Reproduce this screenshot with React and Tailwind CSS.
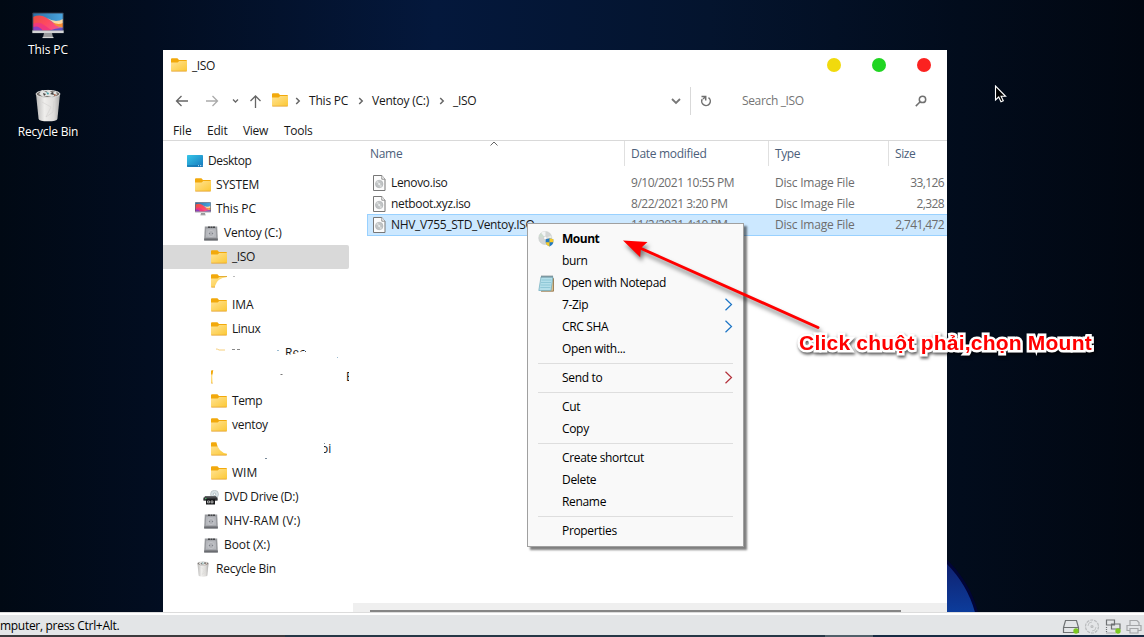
import React from 'react';

const TREE = [
  { label: 'Desktop', icon: 'desktop', pad: 'pl-[24px]', track: 'tracking-[-0.4px]' },
  { label: 'SYSTEM', icon: 'folder', pad: 'pl-[32px]', track: 'tracking-[-0.15px]' },
  { label: 'This PC', icon: 'pc', pad: 'pl-[32px]', track: 'tracking-[-0.1px]' },
  { label: 'Ventoy (C:)', icon: 'drive', pad: 'pl-[40px]', track: 'tracking-[-0.2px]' },
  { label: '_ISO', icon: 'folder', pad: 'pl-[48px]', track: 'tracking-[-0.4px]', active: true },
  { hidden: 'a' },
  { label: 'IMA', icon: 'folder', pad: 'pl-[48px]', track: 'tracking-[-0.1px]' },
  { label: 'Linux', icon: 'folder', pad: 'pl-[48px]', track: 'tracking-[-0.4px]' },
  { hidden: 'b' },
  { hidden: 'c' },
  { label: 'Temp', icon: 'folder', pad: 'pl-[48px]', track: 'tracking-[-0.4px]' },
  { label: 'ventoy', icon: 'folder', pad: 'pl-[48px]', track: 'tracking-[-0.3px]' },
  { hidden: 'd' },
  { label: 'WIM', icon: 'folder', pad: 'pl-[48px]', track: 'tracking-[0px]' },
  { label: 'DVD Drive (D:)', icon: 'dvd', pad: 'pl-[40px]', track: 'tracking-[-0.35px]' },
  { label: 'NHV-RAM (V:)', icon: 'drive', pad: 'pl-[40px]', track: 'tracking-[0.1px]' },
  { label: 'Boot (X:)', icon: 'drive', pad: 'pl-[40px]', track: 'tracking-[-0.1px]' },
  { label: 'Recycle Bin', icon: 'bin', pad: 'pl-[32px]', track: 'tracking-[-0.25px]' },
];

const FILES = [
  { name: 'Lenovo.iso', date: '9/10/2021 10:55 PM', size: '33,126' },
  { name: 'netboot.xyz.iso', date: '8/22/2021 3:20 PM', size: '2,328' },
  { name: 'NHV_V755_STD_Ventoy.ISO', date: '11/2/2021 4:10 PM', size: '2,741,472', selected: true },
];

const MENU = [
  [
    { label: 'Mount', icon: 'disc', bold: true },
    { label: 'burn' },
    { label: 'Open with Notepad', icon: 'notepad' },
    { label: '7-Zip', arrow: '#1b74c5' },
    { label: 'CRC SHA', arrow: '#1b74c5' },
    { label: 'Open with...' },
  ],
  [{ label: 'Send to', arrow: '#b3303a' }],
  [{ label: 'Cut' }, { label: 'Copy' }],
  [{ label: 'Create shortcut' }, { label: 'Delete' }, { label: 'Rename' }],
  [{ label: 'Properties' }],
];

function Folder() {
  return (
    <svg width="16" height="14" viewBox="0 0 16 14" className="shrink-0">
      <defs>
        <linearGradient id="fold" x1="0" y1="0" x2="1" y2="1">
          <stop offset="0" stopColor="#ffe394" />
          <stop offset="1" stopColor="#fcc835" />
        </linearGradient>
      </defs>
      <path d="M0 1.2Q0 .3 1 .3h5.4L8 2h7q1 0 1 1v9.5H0z" fill="#f2a90c" />
      <path d="M0 4.5h6.6L8.2 3H16v9.2q0 .8-.8.8H.8q-.8 0-.8-.8z" fill="url(#fold)" />
      <path d="M.3 13.2h15.4" stroke="#e3a02a" strokeWidth=".8" />
    </svg>
  );
}

function Monitor({ big }) {
  return (
    <svg width={big ? 32 : 16} height={big ? 27 : 14} viewBox="0 0 32 27" preserveAspectRatio="none" className="shrink-0">
      <defs>
        <linearGradient id="sky" x1="0" x2="1">
          <stop offset="0" stopColor="#2a6fa5" />
          <stop offset="1" stopColor="#4ba6e0" />
        </linearGradient>
        <linearGradient id="sur" x1="0" y1="0" x2="1" y2=".5">
          <stop offset="0" stopColor="#e8513f" />
          <stop offset=".55" stopColor="#ff4960" />
          <stop offset="1" stopColor="#f4548e" />
        </linearGradient>
      </defs>
      <path d="M.8 1h30.4v18H.8z" fill="url(#sky)" />
      <path d="M1 5Q8 2 14 5.500t10 7.500 7 2v4H1z" fill="url(#sur)" />
      <path d="M15 6q5 3 9 3t7-2v8q-5 0-8-3t-8-6z" fill="#fbd7a4" />
      <path d="M21 10.500q5 2.500 10 .5v4q-6 1-10-4.500z" fill="#f98a35" />
      <path d="M1 12q6-3 11 1t10 6H1z" fill="#f0387c" />
      <path d="M1 15q6-2 10 4H1z" fill="#8c3fc0" />
      <path d="M17 19q6-3 14-3v3z" fill="#5c4fc4" />
      <path d="M.8 1h30.4v18H.8z" fill="none" stroke="#333b4b" strokeWidth=".9" />
      <path d="M.3 18.500h31.400v2.600H.3z" fill="#d3d4d5" />
      <path d="M12 21h8l1 4.500H11z" fill="#98999b" />
      <path d="M10.500 25.500h11" stroke="#d7d7d7" strokeWidth="1.200" />
    </svg>
  );
}

function Bin({ big }) {
  return (
    <svg width={big ? 26 : 12} height={big ? 33 : 16} viewBox="0 0 26 33" preserveAspectRatio="none" className="shrink-0">
      <defs>
        <linearGradient id="bin" x1="0" x2="1">
          <stop offset="0" stopColor="#b9b8b7" />
          <stop offset=".35" stopColor="#efeeec" />
          <stop offset=".75" stopColor="#dddbd9" />
          <stop offset="1" stopColor="#aaa9a8" />
        </linearGradient>
      </defs>
      <path d="M1 5l2.600 25q.5 2.300 9.400 2.300t9.400-2.300L25 5z" fill="url(#bin)" />
      <ellipse cx="13" cy="5" rx="12" ry="3.600" fill="#77716d" stroke="#dededd" />
      <path d="M4 5l3-4 4 2 3-2 3 3 4-2 1 4-5 2-5-1-4 1z" fill="#e2e3e1" />
      <path d="M8 4l3 1-2 2zM15 5l3-2 1 3z" fill="#44403f" />
      <path d="M11 3l3 1-1 2z" fill="#399da5" />
      <path d="M19 5l3 1-3 1z" fill="#a55b42" />
      <path d="M7 13l9 5-5 10 7-5 1-11" fill="none" stroke="#d2d0ce" strokeWidth=".6" />
    </svg>
  );
}

function Drive() {
  return (
    <svg width="14" height="15" viewBox="0 0 14 15" className="shrink-0">
      <path d="M.8.5h12.400l.6 12v2H.2v-2z" fill="#96989c" />
      <path d="M2.200 2.500h9.600l.5 9H1.700z" fill="#b6b8bd" />
      <path d="M4 1.300h7" stroke="#454649" strokeWidth="1.500" strokeDasharray="2 .5" />
      <circle cx="7" cy="7.500" r="3" fill="#aeb0b5" stroke="#cfd0d4" strokeWidth=".6" />
      <path d="M5 7.500h1m2 0h1" stroke="#7d8088" />
      <path d="M.2 12.500h13.600v2H.2z" fill="#6a6c71" />
    </svg>
  );
}

function Dvd() {
  return (
    <svg width="16" height="15" viewBox="0 0 16 15" className="shrink-0">
      <circle cx="11.500" cy="4.300" r="4" fill="#d7e1e5" stroke="#abb5b9" strokeWidth=".6" />
      <circle cx="11.500" cy="4.300" r="1.200" fill="#fff" stroke="#83959b" strokeWidth=".5" />
      <path d="M2 6h11l1.500 3v1.500H.5V9z" fill="#606265" />
      <path d="M.5 7.500h14v3H.5z" fill="#303235" />
      <path d="M3 9h9v5.500H3z" fill="#17181a" />
      <path d="M4.500 11h2v1.800h-2zM8 11h2v1.800H8z" fill="none" stroke="#ddd" strokeWidth=".7" />
      <path d="M2 8.600h1.500" stroke="#4fc269" />
    </svg>
  );
}

function DesktopIcon() {
  return (
    <svg width="16" height="12" viewBox="0 0 16 12" className="shrink-0">
      <defs>
        <linearGradient id="desk" x1="0" y1="0" x2="1" y2="1">
          <stop offset="0" stopColor="#36c6e8" />
          <stop offset="1" stopColor="#1678bd" />
        </linearGradient>
      </defs>
      <rect width="16" height="12" rx=".7" fill="url(#desk)" />
      <path d="M0 11h16" stroke="#1269a4" strokeWidth="1" />
      <path d="M11 10.700h1m1 0h1m.7 0h.6" stroke="#d8f5ff" strokeWidth=".9" />
    </svg>
  );
}

function FileIcon() {
  return (
    <svg width="13" height="16" viewBox="0 0 13 16" className="shrink-0">
      <path d="M.5.5h8.300l3.200 3.700v11.300H.5z" fill="#fcfcfc" stroke="#777" />
      <path d="M8.800.5v3.700H12" fill="#fff" stroke="#777" strokeWidth=".8" />
      <circle cx="6.200" cy="9" r="3.800" fill="#c1c4c5" stroke="#a4a8aa" strokeWidth=".5" />
      <path d="M6.200 9L3 7.300a3.700 3.700 0 012-1.900zM6.200 9l3 1.800a3.700 3.700 0 01-2 1.800z" fill="#d8dada" />
      <circle cx="6.200" cy="9" r="1.100" fill="#edf1f1" />
    </svg>
  );
}

function DiscIcon() {
  return (
    <svg width="16" height="16" viewBox="0 0 16 16">
      <circle cx="7.300" cy="7" r="6.600" fill="#d3d6d5" stroke="#c4cac8" strokeWidth=".5" />
      <path d="M7.300 7L3 1.900Q5 .5 7.500.6z" fill="#f3f5f5" />
      <path d="M7.300 7L.8 5.700Q1.200 3.500 3 2z" fill="#cddccf" />
      <path d="M7.300 7l6 1.500v-4z" fill="#e8eae6" />
      <circle cx="7.300" cy="7" r="1.700" fill="#fafafa" stroke="#bbb" strokeWidth=".4" />
      <path d="M11.500 7.200l3.800 1v2.900q0 2.900-3.800 4.400-3.800-1.500-3.800-4.400V8.200z" fill="#2479bf" />
      <path d="M11.500 7.200l3.800 1v3h-3.800zM7.800 11.200h3.700v4.300q-3.400-1.300-3.700-4.300z" fill="#f8ca25" />
    </svg>
  );
}

function Notepad() {
  return (
    <svg width="17" height="17" viewBox="0 0 17 17">
      <path d="M14 3l1.500.5v12.700H3" fill="#dbbe8c" stroke="#8b6b3f" strokeWidth=".8" />
      <path d="M3 1.800h12l-2 13.700H.8z" fill="#b4dfea" stroke="#6fabbb" strokeWidth=".7" />
      <path d="M3.500 5h10M3 7.500h10M2.600 10h10M2.300 12.500h10" stroke="#86c1d2" strokeWidth=".8" />
      <path d="M3.500 1.500h12" stroke="#4d6268" strokeWidth="1.800" strokeDasharray="1 1" />
    </svg>
  );
}

const ICONS = { folder: Folder, pc: Monitor, bin: Bin, drive: Drive, dvd: Dvd, desktop: DesktopIcon, disc: DiscIcon, notepad: Notepad };

function Chevron({ className, color = '#666' }) {
  return (
    <svg width="6" height="8" viewBox="0 0 6 8" className={className}>
      <path d="M1.200 1l3 3-3 3" fill="none" stroke={color} strokeWidth="1.500" />
    </svg>
  );
}

// Folders whose names are brushed out, only a few scraps stay visible
function HiddenRow({ kind }) {
  return (
    <div className="relative flex h-6 items-center overflow-hidden pl-[48px]">
      <Folder />
      {kind === 'a' && (
        <svg className="absolute inset-0" width="186" height="24">
          <path d="M52 24V17Q54 9 64 8l10-1v17z" fill="#fff" />
          <path d="M64 6h10v10H64z" fill="#fff" />
          <path d="M57 7.500h7" stroke="#e3ae37" />
          <path d="M70 7.500h2" stroke="#bbb" />
        </svg>
      )}
      {kind === 'b' && (
        <>
          <span className="absolute left-[122px] top-[3px] text-[12px] leading-[18px]">Rec</span>
          <svg className="absolute inset-0" width="186" height="24">
            <path d="M46 0h18v24H46z" fill="#fff" />
            <path d="M120 14.500l10-1.500 6-2 13-2v15h-29z" fill="#fff" />
            <path d="M53 8q2 0 3 1h6" fill="none" stroke="#f6cf7d" />
            <path d="M69 8.500h3m2 0h3" stroke="#888" />
            <path d="M114 9.500h2M174 16.500h1" stroke="#9abbd1" />
            <path d="M142 10.500h1" stroke="#555" />
          </svg>
        </>
      )}
      {kind === 'c' && (
        <>
          <svg className="absolute inset-0" width="186" height="24">
            <path d="M52 0Q47 12 51 24h16V0z" fill="#fff" />
            <path d="M117.500 9.500h2" stroke="#777" />
          </svg>
          <span className="absolute left-[183px] top-[3px] text-[12px] leading-[18px]">E</span>
        </>
      )}
      {kind === 'd' && (
        <>
          <svg className="absolute inset-0" width="186" height="24">
            <path d="M53 4q2 12 12 13v-13z" fill="#fff" />
            <path d="M102 21.500h2M161 6.500h1" stroke="#789" />
          </svg>
          <span className="absolute left-[158px] top-[3px] text-[12px] leading-[18px]">oi</span>
          <span className="absolute left-[156px] top-[7px] h-4 w-[5px] bg-white" />
        </>
      )}
    </div>
  );
}

function TreeRow({ item }) {
  if (item.hidden) return <HiddenRow kind={item.hidden} />;
  const Icon = ICONS[item.icon];
  return (
    <div className={`flex h-6 items-center ${item.pad} ${item.active ? 'rounded-r-[2px] bg-[#d9d9d9]' : ''}`}>
      <span className="flex w-[16px] shrink-0 justify-center">
        <Icon />
      </span>
      <span className={`ml-[5px] ${item.track}`}>{item.label}</span>
    </div>
  );
}

function AddressBar() {
  return (
    <div className="flex h-[41px] items-center text-[12px]">
      <svg width="90" height="20" viewBox="0 0 90 20" className="ml-[12px] shrink-0" fill="none" stroke="#666" strokeWidth="1.300">
        <path d="M13 10H1.500M6.500 5l-5 5 5 5" />
        <path d="M31 10h11.500M37.500 5l5 5-5 5" stroke="#aaa" />
        <path d="M58 8.500l2.500 2.500L63 8.500" />
        <path d="M80.500 17V5M75.500 10l5-5 5 5" />
      </svg>
      <span className="-mt-[1px] ml-[7px]"><Folder /></span>
      <Chevron className="ml-[7px]" />
      <span className="ml-[8px] w-[42px] shrink-0 whitespace-nowrap tracking-[-0.2px]">This PC</span>
      <Chevron className="ml-[7px]" />
      <span className="ml-[8px] w-[60px] shrink-0 whitespace-nowrap tracking-[-0.25px]">Ventoy (C:)</span>
      <Chevron className="ml-[7px]" />
      <span className="ml-[8px] tracking-[-0.3px]">_ISO</span>
      <div className="flex-1" />
      <svg width="10" height="7" viewBox="0 0 10 7" className="mr-[9px] mt-[2px]">
        <path d="M1 1l4 4 4-4" fill="none" stroke="#777" strokeWidth="1.800" />
      </svg>
      <div className="h-[28px] w-px bg-[#d9d9d9]" />
      <svg width="12" height="12" viewBox="0 0 12 12" className="ml-[9px] mt-[1px]" fill="none" stroke="#707070" strokeWidth="1.500">
        <path d="M8.500 2.700A4.300 4.300 0 112.200 4.200" />
        <path d="M1.500 1.500h4.200v4" />
        <path d="M5.700 1.500L3 4" />
      </svg>
      <span className="ml-[30px] w-[173px] tracking-[-0.35px] text-[#757575]">Search _ISO</span>
      <svg width="12" height="12" viewBox="0 0 12 12" className="mr-[20px]" fill="none" stroke="#707070" strokeWidth="1.500">
        <circle cx="7.500" cy="4.400" r="3.200" />
        <path d="M5.200 6.800L.8 11.100" />
      </svg>
    </div>
  );
}

function FileList() {
  return (
    <div className="flex min-w-0 flex-1 flex-col">
      <div className="relative flex h-[25px] shrink-0 items-center text-[#4c607a]">
        <svg width="8" height="5" viewBox="0 0 8 5" className="absolute left-[137px] top-0">
          <path d="M.5 4.500L4 1l3.500 3.500" fill="none" stroke="#666" />
        </svg>
        <span className="w-[271px] shrink-0 pl-[17px] tracking-[-0.3px]">Name</span>
        <span className="flex h-full w-[144px] shrink-0 items-center border-l border-[#e0e0e0] pl-[6px] tracking-[-0.3px]">Date modified</span>
        <span className="flex h-full w-[120px] shrink-0 items-center border-l border-[#e0e0e0] pl-[6px] tracking-[-0.4px]">Type</span>
        <span className="flex h-full flex-1 items-center border-l border-[#e0e0e0] pl-[6px] tracking-[-0.4px]">Size</span>
      </div>
      <div className="ml-[14px] mt-[6px] flex flex-col">
        {FILES.map((f) => (
          <div
            key={f.name}
            className={`flex items-center border border-r-0 ${f.selected ? 'h-[22px] border-[#99d1ff] bg-[#cce8ff]' : 'h-[21px] border-transparent'}`}
          >
            <span className="ml-[5px]"><FileIcon /></span>
            <span className="ml-[5px] w-[240px] shrink-0 tracking-[-0.35px]">{f.name}</span>
            <span className="w-[144px] shrink-0 tracking-[-0.48px] text-[#6d6d6d]">{f.date}</span>
            <span className="w-[90px] shrink-0 whitespace-nowrap tracking-[-0.22px] text-[#6d6d6d]">Disc Image File</span>
            <span className="flex-1 pr-[3px] text-right tracking-[-0.6px] text-[#6d6d6d]">{f.size}</span>
          </div>
        ))}
      </div>
      <div className="flex-1" />
      <div className="flex h-[9px] items-end bg-[#efefef]">
        <div className="ml-[17px] h-[2px] w-[531px] bg-[#868686]" />
      </div>
    </div>
  );
}

function ExplorerWindow() {
  return (
    <div className="absolute left-[163px] top-[50px] flex h-[562px] w-[784px] flex-col overflow-hidden bg-white">
      <div className="flex h-[30px] shrink-0 items-center pl-[8px] pr-[16px]">
        <Folder />
        <span className="ml-[5px] flex-1 pt-[2px] tracking-[-0.4px]">_ISO</span>
        <span className="mr-[31px] h-[14px] w-[14px] rounded-full bg-[#f1da0d]" />
        <span className="mr-[31px] h-[14px] w-[14px] rounded-full bg-[#20d522]" />
        <span className="h-[14px] w-[14px] rounded-full bg-[#fb2220]" />
      </div>
      <AddressBar />
      <div className="flex h-[20px] shrink-0 items-center border-b border-[#d9d9d9] pl-[10px]">
        <span className="w-[34px] tracking-[-0.1px]">File</span>
        <span className="w-[36px] tracking-[-0.2px]">Edit</span>
        <span className="w-[41px] tracking-[-0.3px]">View</span>
        <span className="tracking-[-0.3px]">Tools</span>
      </div>
      <div className="flex min-h-0 flex-1">
        <div className="w-[190px] shrink-0 pr-1 pt-[8px]">
          {TREE.map((t, i) => <TreeRow key={i} item={t} />)}
        </div>
        <FileList />
      </div>
    </div>
  );
}

function ContextMenu() {
  return (
    <div className="absolute left-[527px] top-[223px] w-[217px] border border-[#a0a0a0] bg-[#f9f9f9] py-[4px] text-black shadow-[3px_3px_2px_rgba(0,0,0,0.5)]">
      {MENU.map((group, g) => (
        <div key={g}>
          {g > 0 && <div className="mx-[10px] my-[3px] h-px bg-[#dedede]" />}
          {group.map((m) => {
            const Icon = ICONS[m.icon];
            return (
              <div key={m.label} className="flex h-[22px] items-center pl-[11px] pr-[10px]">
                <span className="w-[23px] shrink-0">
                  {Icon && <span className="-ml-px block"><Icon /></span>}
                </span>
                <span className={`flex-1 ${m.bold ? 'font-bold tracking-[-0.5px]' : 'tracking-[-0.33px]'}`}>{m.label}</span>
                {m.arrow && (
                  <svg width="9" height="13" viewBox="0 0 9 13" className="-mt-[2px]">
                    <path d="M1.500.7l6 5.800-6 5.800" fill="none" stroke={m.arrow} strokeWidth="1.200" />
                  </svg>
                )}
              </div>
            );
          })}
        </div>
      ))}
    </div>
  );
}

function Annotation() {
  return (
    <>
      <svg className="absolute left-0 top-0 [filter:drop-shadow(2px_4px_2px_rgba(0,0,0,0.5))]" width="1144" height="612">
        <path d="M640 248L818 327.500" stroke="#f00" strokeWidth="3" strokeLinecap="round" />
        <path d="M623 240.500l24.500 1.500-6.500 6-.8 9.200z" fill="#f00" />
      </svg>
      <div className="absolute left-[799px] top-[330px] whitespace-nowrap font-['Liberation_Sans',sans-serif] text-[21px] font-bold leading-[26px] tracking-[0.22px] text-[#f00] [-webkit-text-stroke:5px_#fff] [filter:drop-shadow(1px_2px_1.5px_rgba(0,0,0,0.65))] [paint-order:stroke_fill] [stroke-linejoin:round]">
        Click chuột phải,chọn Mount
      </div>
    </>
  );
}

function StatusBar() {
  return (
    <div className="flex h-[25px] shrink-0 flex-col border-t border-[#dcdcdc] bg-[#e3e5e7]">
      <div className="h-[2px] shrink-0 bg-white" />
      <div className="flex h-[20px] shrink-0 items-center justify-between">
        <span className="mt-[2px] tracking-[-0.3px] text-black">mputer, press Ctrl+Alt.</span>
        <svg width="82" height="18" viewBox="0 0 82 18" fill="none" stroke="#6e7173" strokeWidth="1.200" className="mt-[2px]">
          <path d="M3.500 3.500h11l2 7v5h-15v-5zM2 10.500h14" />
          <circle cx="14" cy="14" r="2.700" fill="#7bc820" stroke="none" />
          <g stroke="#b9bbbd">
            <circle cx="30" cy="9.500" r="6.500" strokeDasharray="3 1" />
            <circle cx="30" cy="9.500" r="1" />
            <path d="M26 9a4 4 0 014-4M34 10a4 4 0 01-4 4" strokeWidth=".8" />
          </g>
          <path d="M44.500 3h8v5h-8zM49.500 7h8.500v5h-8.500z" fill="#e3e5e7" />
          <path d="M44.500 10v6h9" strokeDasharray="1 1" />
          <circle cx="56" cy="14" r="2.700" fill="#7bc820" stroke="none" />
          <g stroke="#a4a6a8">
            <path d="M68 8V3.500h7l2 2V8M68 13.500h-3V8.500h14v5h-3M68 11.500h8v4.500h-8z" />
          </g>
        </svg>
      </div>
      <div className="flex h-[2px] shrink-0">
        <div className="w-[285px] bg-[#3c3a3d]" />
        <div className="w-[540px] bg-[#263746]" />
        <div className="w-[48px] bg-[#51606a]" />
        <div className="flex-1 bg-[#172b43]" />
      </div>
    </div>
  );
}

export default function App() {
  return (
    <div className="flex h-[637px] w-[1144px] flex-col overflow-hidden font-['Open_Sans','Noto_Sans',sans-serif] text-[12px] leading-[18px] text-[#171717]">
      <div className="relative h-[612px] shrink-0 overflow-hidden bg-[linear-gradient(90deg,#010914_0%,#020d20_13%,#04183c_38%,#04142e_62%,#020c1c_84%,#010711_100%)]">
        <svg className="absolute left-[947px] top-[550px]" width="40" height="62">
          <defs>
            <linearGradient id="petal" x1="0" y1="0" x2="0" y2="1">
              <stop offset="0" stopColor="#10206d" />
              <stop offset="1" stopColor="#0c3d9d" />
            </linearGradient>
          </defs>
          <path d="M-2 10Q22 33 30 64H-2z" fill="url(#petal)" stroke="#020537" strokeWidth="3" />
        </svg>

        <div className="absolute left-0 top-[12px] flex w-[96px] flex-col items-center text-white">
          <Monitor big />
          <span className="mt-[2px] tracking-[-0.1px] [text-shadow:1px_1px_1px_#000]">This PC</span>
        </div>
        <div className="absolute left-0 top-[89px] flex w-[96px] flex-col items-center text-white">
          <Bin big />
          <span className="mt-[1px] tracking-[-0.2px] [text-shadow:1px_1px_1px_#000]">Recycle Bin</span>
        </div>

        <ExplorerWindow />
        <ContextMenu />
        <Annotation />

        <svg className="absolute left-[994px] top-[85px]" width="13" height="18" viewBox="0 0 13 18">
          <path d="M1.500 1v14l3.200-3 2.300 4.800 2.300-1-2.200-4.500h4.500z" fill="#000" stroke="#fff" strokeWidth="1.100" />
        </svg>
      </div>
      <StatusBar />
    </div>
  );
}
